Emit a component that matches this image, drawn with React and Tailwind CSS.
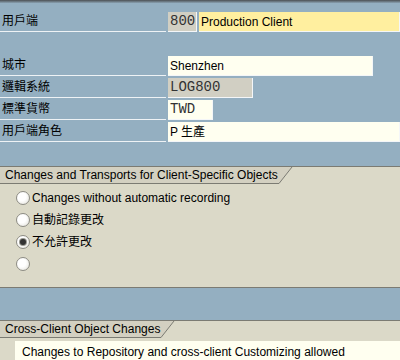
import React from 'react';

const sans = "font-['Liberation_Sans','Noto_Sans_CJK_TC',sans-serif]";
const mono = "font-['Liberation_Mono','Noto_Sans_CJK_TC',monospace]";

function Label({ children }) {
  return (
    <div className="w-[166px] h-[22px] flex items-end border-b border-[#eef2f5] pl-[2px] pb-[1px] text-[12px] text-black">
      {children}
    </div>
  );
}

function Field({ w, bg = 'bg-[#fffff0]', font = sans, children }) {
  return (
    <div
      className={`${w} h-[20px] ${bg} ${font} flex items-center pl-[2px] text-[12px] text-black border-r border-b border-[#f4f6f8]`}
    >
      {children}
    </div>
  );
}

function Row({ label, children }) {
  return (
    <div className="flex items-end h-[22px]">
      <Label>{label}</Label>
      <div className="flex items-end gap-[2px] ml-[2px] flex-1">{children}</div>
    </div>
  );
}

function Tab({ text }) {
  return (
    <div className="flex items-stretch h-[17px]">
      <div className="bg-[#d3d0c1] border-b border-[#7b7b73] pl-[5px] pr-[1px] flex items-center text-[12px] text-black">
        {text}
      </div>
      <svg width="14" height="17" viewBox="0 0 14 17" className="block">
        <polygon points="0,0 13,0 0,17" fill="#d3d0c1" />
        <line x1="0" y1="16.5" x2="13" y2="0" stroke="#7b7b73" strokeWidth="1" />
      </svg>
    </div>
  );
}

function Radio({ checked, label }) {
  return (
    <div className="flex items-center h-[22px] pl-[16px] gap-[2px]">
      <div className="w-[14px] h-[14px] rounded-full border border-[#8d8c84] bg-[radial-gradient(circle_at_40%_40%,#ffffff_40%,#deddd4_100%)] flex items-center justify-center">
        {checked && <div className="w-[6px] h-[6px] rounded-full bg-[#333] ring-1 ring-[#9a9a92]" />}
      </div>
      <span className="text-[12px] text-black">{label}</span>
    </div>
  );
}

export default function App() {
  return (
    <div className={`w-[400px] h-[360px] overflow-hidden bg-[#94afc1] ${sans}`}>
      <div className="h-[3px] bg-gradient-to-b from-[#4c5054] to-[#8aa2b2]" />
      <div className="pt-[7px]">
        <Row label="用戶端">
          <Field w="w-[29px]" bg="bg-[#d1cfc3]" font={mono}>
            <span className="text-[14px] text-[#333]">800</span>
          </Field>
          <Field w="flex-1" bg="bg-[#ffef9f]">Production Client</Field>
        </Row>
        <div className="h-[22px]" />
        <Row label="城市">
          <Field w="w-[205px]">Shenzhen</Field>
        </Row>
        <Row label="邏輯系統">
          <Field w="w-[85px]" bg="bg-[#d1cfc3]" font={mono}>
            <span className="text-[14px] text-[#333]">LOG800</span>
          </Field>
        </Row>
        <Row label="標準貨幣">
          <Field w="w-[45px]" font={mono}>
            <span className="text-[14px] text-[#333]">TWD</span>
          </Field>
        </Row>
        <Row label="用戶端角色">
          <Field w="flex-1">P 生產</Field>
        </Row>
      </div>

      <div className="h-[24px]" />

      <div className="bg-[#dbd9c8] border-t border-b border-[#7b7b73] pb-[12px]">
        <Tab text="Changes and Transports for Client-Specific Objects" />
        <div className="pt-[3px]">
          <Radio label="Changes without automatic recording" />
          <Radio label="自動記錄更改" />
          <Radio checked label="不允許更改" />
          <Radio label="" />
        </div>
      </div>

      <div className="h-[32px]" />

      <div className="bg-[#dbd9c8] border-t border-[#7b7b73] h-[40px]">
        <Tab text="Cross-Client Object Changes" />
        <div className="ml-[15px] mt-[3px] h-[30px] bg-[#fffff0] pl-[7px] pt-[2px] text-[12px] text-black">
          Changes to Repository and cross-client Customizing allowed
        </div>
      </div>
    </div>
  );
}
